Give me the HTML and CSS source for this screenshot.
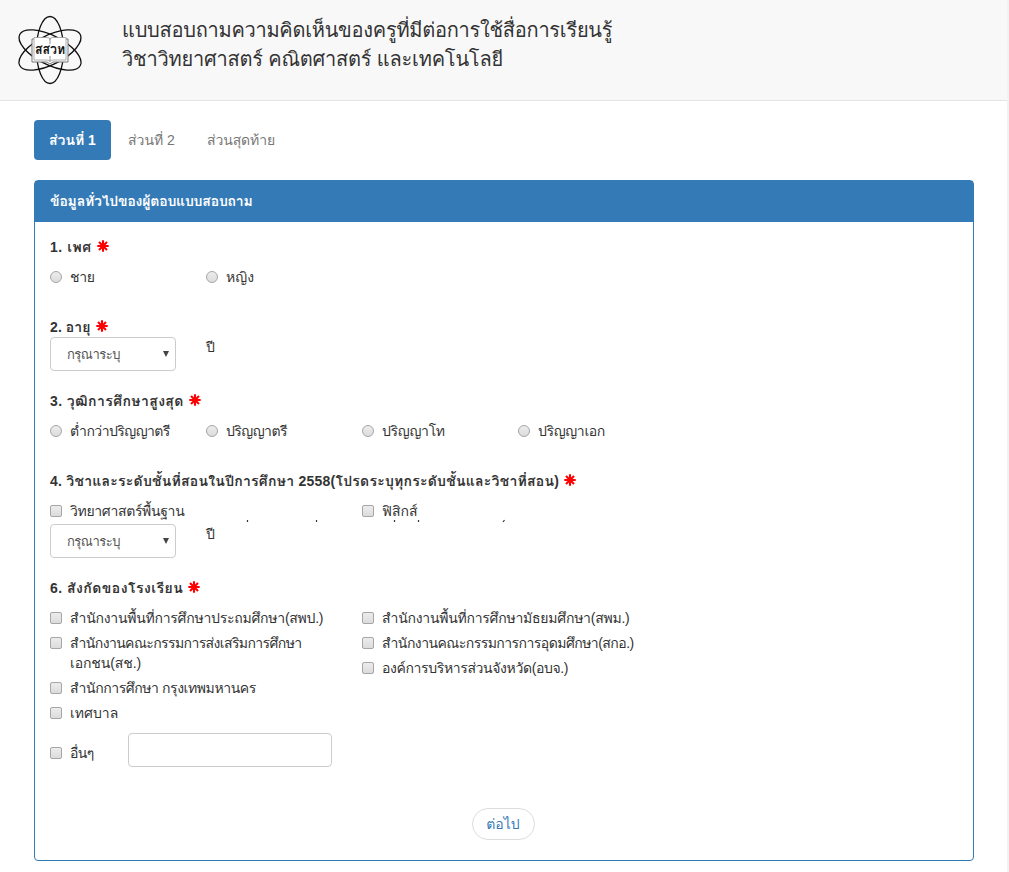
FILE: index.html
```html
<!DOCTYPE html>
<html lang="th">
<head>
<meta charset="utf-8">
<title>แบบสอบถามความคิดเห็นของครู</title>
<link rel="stylesheet" href="styles.css">
</head>
<body>
<svg class="defs" width="0" height="0">
  <symbol id="req" viewBox="0 0 12 12"><path d="M6 .3v11.400M.3 6h11.400M2 2l8 8M10 2l-8 8" stroke="#f00" stroke-width="2.100" fill="none"/></symbol>
</svg>
<div class="page">
  <header class="topbar">
    <svg class="logo" viewBox="0 0 68 70">
      <g fill="none" stroke="#111" stroke-width="1.3">
        <ellipse cx="34" cy="35" rx="13.500" ry="33.500"/>
        <ellipse cx="34" cy="35" rx="34" ry="14.500" transform="rotate(27 34 35)"/>
        <ellipse cx="34" cy="35" rx="34" ry="14.500" transform="rotate(-27 34 35)"/>
      </g>
      <path d="M16 24H52V47H37l-3 2-3-2H16Z" fill="#fff" stroke="#777"/>
      <path d="M18 22.500H31q3 0 3 2 0-2 3-2H50V45H37q-3 0-3 2 0-2-3-2H18Z" fill="#fff" stroke="#999" stroke-width=".8"/>
      <path d="M34 24v5M34 41v5" stroke="#777" stroke-width=".8"/>
      <text x="34" y="39" text-anchor="middle" textLength="30" lengthAdjust="spacingAndGlyphs">สสวท</text>
    </svg>
    <h1 class="title"><span class="t1">แบบสอบถามความคิดเห็นของครูที่มีต่อการใช้สื่อการเรียนรู้</span><span class="t2">วิชาวิทยาศาสตร์ คณิตศาสตร์ และเทคโนโลยี</span></h1>
  </header>
  <nav class="tabs">
    <a class="tab active">ส่วนที่ 1</a>
    <a class="tab second">ส่วนที่ 2</a>
    <a class="tab last">ส่วนสุดท้าย</a>
  </nav>
  <main class="panel">
    <h2 class="panel-head"><span class="ph">ข้อมูลทั่วไปของผู้ตอบแบบสอบถาม</span></h2>
    <div class="body">
      <section class="question">
        <div class="label"><span class="l1">1. เพศ</span><svg class="req"><use href="#req"/></svg></div>
        <div class="radios">
          <label class="opt"><i class="radio"></i><span class="g1">ชาย</span></label>
          <label class="opt"><i class="radio"></i><span>หญิง</span></label>
        </div>
      </section>
      <section class="question age">
        <div class="label"><span class="l2">2. อายุ</span><svg class="req"><use href="#req"/></svg></div>
        <div class="select-row"><div class="select"><span>กรุณาระบุ</span><i class="arrow"></i></div><span class="unit">ปี</span></div>
      </section>
      <section class="question">
        <div class="label"><span class="l3">3. วุฒิการศึกษาสูงสุด</span><svg class="req"><use href="#req"/></svg></div>
        <div class="radios">
          <label class="opt"><i class="radio"></i><span class="e1">ต่ำกว่าปริญญาตรี</span></label>
          <label class="opt"><i class="radio"></i><span class="e2">ปริญญาตรี</span></label>
          <label class="opt"><i class="radio"></i><span class="e3">ปริญญาโท</span></label>
          <label class="opt"><i class="radio"></i><span class="e4">ปริญญาเอก</span></label>
        </div>
      </section>
      <section class="question subjects">
        <div class="label"><span class="l4">4. วิชาและระดับชั้นที่สอนในปีการศึกษา 2558(โปรดระบุทุกระดับชั้นและวิชาที่สอน)</span><svg class="req"><use href="#req"/></svg></div>
        <div class="columns">
          <label class="opt"><i class="check"></i><span class="s1">วิทยาศาสตร์พื้นฐาน</span></label>
          <label class="opt"><i class="check"></i><span class="s2">ฟิสิกส์</span></label>
        </div>
        <svg class="marks" viewBox="0 0 500 3"><path d="M197.500 -1v2M266.500 -1v2M344.500 -1v2M368.500 -1v2M454.500 -1l-1.500 2" stroke="#333" stroke-width="1.200"/></svg>
        <div class="select-row"><div class="select"><span>กรุณาระบุ</span><i class="arrow"></i></div><span class="unit">ปี</span></div>
      </section>
      <section class="question school">
        <div class="label"><span class="l6">6. สังกัดของโรงเรียน</span><svg class="req"><use href="#req"/></svg></div>
        <div class="columns">
          <div class="col">
            <label class="opt"><i class="check"></i><span class="a1">สำนักงานพื้นที่การศึกษาประถมศึกษา(สพป.)</span></label>
            <label class="opt"><i class="check"></i><span><span class="a2">สำนักงานคณะกรรมการส่งเสริมการศึกษา</span><br><span class="a3">เอกชน(สช.)</span></span></label>
            <label class="opt"><i class="check"></i><span class="a4">สำนักการศึกษา กรุงเทพมหานคร</span></label>
            <label class="opt"><i class="check"></i><span class="a5">เทศบาล</span></label>
          </div>
          <div class="col">
            <label class="opt"><i class="check"></i><span class="b1">สำนักงานพื้นที่การศึกษามัธยมศึกษา(สพม.)</span></label>
            <label class="opt"><i class="check"></i><span class="b2">สำนักงานคณะกรรมการการอุดมศึกษา(สกอ.)</span></label>
            <label class="opt"><i class="check"></i><span class="b3">องค์การบริหารส่วนจังหวัด(อบจ.)</span></label>
          </div>
        </div>
        <div class="other"><label class="opt"><i class="check"></i><span class="a6">อื่นๆ</span></label><input class="field" type="text"></div>
      </section>
      <div class="actions"><button class="next" type="button">ต่อไป</button></div>
    </div>
  </main>
</div>
</body>
</html>
```
FILE: styles.css
```css
* { box-sizing: border-box; }
body { margin: 0; height: 872px; overflow: hidden; background: #f2f2f2; color: #333; font: 14px/20px "Liberation Sans", Loma, sans-serif; }
.defs { display: block; }
.page { width: 1007px; height: 872px; background: #fff; }
.topbar { height: 101px; display: flex; background: #f8f8f8; border-bottom: 1px solid #e4e4e4; padding: 15px 0 0 16px; }
.logo { width: 68px; height: 70px; flex: none; }
.logo text { font-size: 14px; font-weight: bold; fill: #111; }
.title { margin: 1px 0 0 38px; font-size: 20px; line-height: 29px; font-weight: normal; white-space: nowrap; }
.title span { display: block; width: max-content; }
.tabs { display: flex; gap: 2px; margin: 19px 0 0 34px; }
.tab { height: 40px; padding: 10px 15px; color: #777; border-radius: 4px; white-space: nowrap; }
.tab.active { width: 77px; background: #337ab7; color: #fff; font-weight: bold; }
.tab.second { width: 77px; }
.panel { width: 940px; height: 681px; margin: 20px 0 0 34px; border: 1px solid #337ab7; border-radius: 4px; }
.panel-head { margin: 0; height: 41px; padding: 10px 15px; background: #337ab7; color: #fff; font-size: 14px; line-height: 20px; }
.body { padding: 15px; }
.question { margin-bottom: 30px; }
.age { margin-bottom: 20px; }
.subjects { margin-bottom: 20px; }
.school { margin-bottom: 41px; }
.label { height: 20px; display: flex; align-items: center; gap: 5px; font-weight: bold; white-space: nowrap; }
.req { width: 12px; height: 12px; position: relative; top: -1px; }
.radios { display: grid; grid-template-columns: repeat(4, 156px); margin-top: 10px; }
.columns { display: grid; grid-template-columns: 312px 312px; margin-top: 10px; }
.col { display: flex; flex-direction: column; gap: 5px; }
.opt { display: flex; gap: 8px; white-space: nowrap; }
.radio, .check { flex: none; width: 12px; height: 12px; margin-top: 4px; border: 1px solid #a6a6a6; background: linear-gradient(#ececec, #dcdcdc); }
.radio { border-radius: 50%; }
.check { border-radius: 2px; }
.select-row { display: flex; gap: 30px; }
.select { width: 126px; height: 34px; display: flex; justify-content: space-between; padding: 7px 6px 0 16px; border: 1px solid #ccc; border-radius: 4px; color: #555; font-size: 13px; letter-spacing: -.5px; white-space: nowrap; }
.arrow { width: 0; height: 0; margin-top: 6px; border: 3px solid transparent; border-top: 6px solid #444; border-bottom: 0; }
.marks { display: block; width: 500px; height: 3px; overflow: visible; }
.other { display: flex; margin-top: 10px; }
.other .opt { width: 78px; padding-top: 10px; }
.field { width: 204px; height: 34px; border: 1px solid #ccc; border-radius: 4px; }
.actions { display: flex; justify-content: center; }
.next { width: 63px; height: 32px; margin-right: 2px; padding: 0; border: 1px solid #ddd; border-radius: 16px; background: #fff; color: #337ab7; font: inherit; }

/* Tracking for individual captions */
.t1 { letter-spacing: -.26px; }
.t2 { letter-spacing: -.2px; }
.last { letter-spacing: -.1px; }
.ph { letter-spacing: -.19px; }
.l1 { letter-spacing: .55px; }
.l2 { letter-spacing: .1px; }
.l3 { letter-spacing: .4px; }
.l4 { letter-spacing: .24px; }
.l6 { letter-spacing: .47px; }
.g1, .e3 { letter-spacing: -.3px; }
.e1, .e2 { letter-spacing: -.55px; }
.e4 { letter-spacing: -.35px; }
.s1 { letter-spacing: -.33px; }
.a1, .b1 { letter-spacing: -.25px; }
.a2 { letter-spacing: -.6px; }
.a3 { letter-spacing: -.1px; }
.a4 { letter-spacing: -.42px; }
.a6 { letter-spacing: -.6px; }
.b2 { letter-spacing: -.54px; }
.b3 { letter-spacing: -.37px; }
```
